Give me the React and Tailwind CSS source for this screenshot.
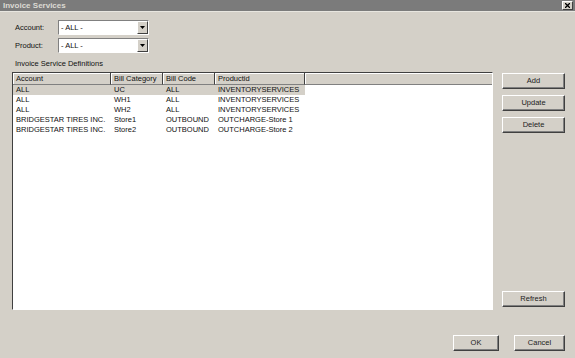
import React from "react";

const rows = [
  ["ALL", "UC", "ALL", "INVENTORYSERVICES"],
  ["ALL", "WH1", "ALL", "INVENTORYSERVICES"],
  ["ALL", "WH2", "ALL", "INVENTORYSERVICES"],
  ["BRIDGESTAR TIRES INC.", "Store1", "OUTBOUND", "OUTCHARGE-Store 1"],
  ["BRIDGESTAR TIRES INC.", "Store2", "OUTBOUND", "OUTCHARGE-Store 2"],
];

const cols = [
  { name: "Account", w: "w-[98px]" },
  { name: "Bill Category", w: "w-[52px]" },
  { name: "Bill Code", w: "w-[52px]" },
  { name: "Productid", w: "w-[90px]" },
];

function Btn({ children, w = "w-[63px]" }) {
  return (
    <div className={`${w} h-[16px] border border-t-white border-l-white border-r-[#404040] border-b-[#404040] bg-[#d4d0c8] shadow-[inset_-1px_-1px_0_#808080] flex items-center justify-center text-[7.5px] text-[#222]`}>
      {children}
    </div>
  );
}

function Select() {
  return (
    <div className="w-[91px] h-[15px] border border-t-[#808080] border-l-[#808080] border-r-white border-b-white bg-white flex">
      <div className="flex-1 pl-[2px] flex items-center text-[7.5px] text-[#111]">- ALL -</div>
      <div className="w-[11px] h-full border border-t-white border-l-white border-r-[#404040] border-b-[#404040] bg-[#d4d0c8] flex items-center justify-center">
        <svg width="5" height="3" viewBox="0 0 5 3"><path d="M0 0H5L2.5 3Z" fill="#000" /></svg>
      </div>
    </div>
  );
}

export default function App() {
  return (
    <div className="w-[575px] h-[358px] bg-[#d4d0c8] flex flex-col" style={{ fontFamily: "'Liberation Sans', Arial, sans-serif" }}>
      <div className="h-[12px] bg-[#7b7b7b] flex items-center justify-between pl-[3px] pr-[2px] border-b border-[#e8e6e0]">
        <span className="text-[8px] font-semibold text-[#dcdad4] leading-none">Invoice Services</span>
        <div className="w-[11px] h-[9px] bg-[#d4d0c8] border border-t-white border-l-white border-r-[#404040] border-b-[#404040] flex items-center justify-center">
          <svg width="5" height="5" viewBox="0 0 5 5"><path d="M0 0L5 5M5 0L0 5" stroke="#000" strokeWidth="1.3" /></svg>
        </div>
      </div>
      <div className="flex pl-[12px] pt-[8px]">
        <div className="w-[481px] flex flex-col">
          <div className="flex items-center h-[15px]">
            <span className="w-[46px] pl-[3px] text-[7.5px] text-[#111]">Account:</span>
            <Select />
          </div>
          <div className="flex items-center h-[15px] mt-[3px]">
            <span className="w-[46px] pl-[3px] text-[7.5px] text-[#111]">Product:</span>
            <Select />
          </div>
          <div className="pl-[3px] mt-[3px] h-[16px] flex items-center text-[7.5px] text-[#111]">Invoice Service Definitions</div>
          <div className="h-[238px] border border-t-[#404040] border-l-[#404040] border-r-white border-b-white bg-white flex flex-col">
            <div className="flex h-[12px] bg-[#d4d0c8]">
              {cols.map((c) => (
                <div key={c.name} className={`${c.w} border-r border-[#404040] border-b border-b-[#808080] shadow-[inset_1px_1px_0_#fff] pl-[3px] flex items-center text-[7.5px] text-[#111] whitespace-nowrap overflow-hidden`}>
                  {c.name}
                </div>
              ))}
              <div className="flex-1 border-b border-[#808080] shadow-[inset_1px_1px_0_#fff]"></div>
            </div>
            {rows.map((r, i) => (
              <div key={i} className={`flex h-[10px] w-[292px] ${i === 0 ? "bg-[#d4d0c8]" : ""}`}>
                {r.map((v, j) => (
                  <div key={j} className={`${cols[j].w} pl-[3px] flex items-center text-[7.5px] text-[#111] whitespace-nowrap overflow-hidden`}>
                    {v}
                  </div>
                ))}
              </div>
            ))}
          </div>
        </div>
        <div className="ml-[9px] flex flex-col pt-[53px] h-[287px]">
          <Btn>Add</Btn>
          <div className="mt-[6px]"><Btn>Update</Btn></div>
          <div className="mt-[6px]"><Btn>Delete</Btn></div>
          <div className="mt-auto"><Btn>Refresh</Btn></div>
        </div>
      </div>
      <div className="flex justify-end pr-[10px] mt-[25px] gap-[15px]">
        <Btn w="w-[46px]">OK</Btn>
        <Btn w="w-[51px]">Cancel</Btn>
      </div>
    </div>
  );
}
